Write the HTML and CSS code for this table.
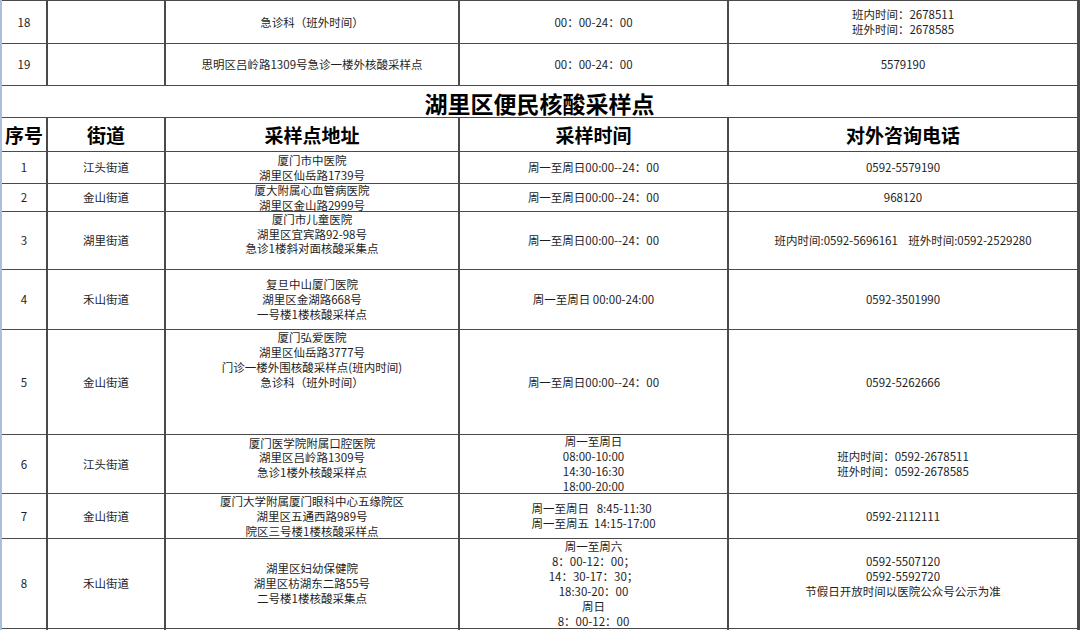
FILE: index.html
```html
<!DOCTYPE html>
<html lang="zh-CN">
<head>
<meta charset="utf-8">
<title>湖里区便民核酸采样点</title>
<link rel="stylesheet" href="styles.css">
</head>
<body>
<div class="sheet">
  <div class="c">18</div>
  <div class="c"></div>
  <div class="c">急诊科（班外时间）</div>
  <div class="c">00：00-24：00</div>
  <div class="c">班内时间：2678511<br>班外时间：2678585</div>

  <div class="c">19</div>
  <div class="c"></div>
  <div class="c">思明区吕岭路1309号急诊一楼外核酸采样点</div>
  <div class="c">00：00-24：00</div>
  <div class="c">5579190</div>

  <div class="title">湖里区便民核酸采样点</div>

  <div class="c th">序号</div>
  <div class="c th">街道</div>
  <div class="c th">采样点地址</div>
  <div class="c th">采样时间</div>
  <div class="c th">对外咨询电话</div>

  <div class="c">1</div>
  <div class="c">江头街道</div>
  <div class="c">厦门市中医院<br>湖里区仙岳路1739号</div>
  <div class="c">周一至周日00:00--24：00</div>
  <div class="c">0592-5579190</div>

  <div class="c">2</div>
  <div class="c">金山街道</div>
  <div class="c tight">厦大附属心血管病医院<br>湖里区金山路2999号</div>
  <div class="c">周一至周日00:00--24：00</div>
  <div class="c">968120</div>

  <div class="c">3</div>
  <div class="c">湖里街道</div>
  <div class="c trail1 snug">厦门市儿童医院<br>湖里区宜宾路92-98号<br>急诊1楼斜对面核酸采集点</div>
  <div class="c">周一至周日00:00--24：00</div>
  <div class="c pre">班内时间:0592-5696161    班外时间:0592-2529280</div>

  <div class="c">4</div>
  <div class="c">禾山街道</div>
  <div class="c">复旦中山厦门医院<br>湖里区金湖路668号<br>一号楼1楼核酸采样点</div>
  <div class="c">周一至周日 00:00-24:00</div>
  <div class="c">0592-3501990</div>

  <div class="c">5</div>
  <div class="c">金山街道</div>
  <div class="c trail3">厦门弘爱医院<br>湖里区仙岳路3777号<br>门诊一楼外围核酸采样点(班内时间)<br>急诊科（班外时间）</div>
  <div class="c">周一至周日00:00--24：00</div>
  <div class="c">0592-5262666</div>

  <div class="c">6</div>
  <div class="c">江头街道</div>
  <div class="c trail1 snug">厦门医学院附属口腔医院<br>湖里区吕岭路1309号<br>急诊1楼外核酸采样点</div>
  <div class="c">周一至周日<br>08:00-10:00<br>14:30-16:30<br>18:00-20:00</div>
  <div class="c">班内时间：0592-2678511<br>班外时间：0592-2678585</div>

  <div class="c">7</div>
  <div class="c">金山街道</div>
  <div class="c">厦门大学附属厦门眼科中心五缘院区<br>湖里区五通西路989号<br>院区三号楼1楼核酸采样点</div>
  <div class="c"><div class="left-lines">周一至周日   8:45-11:30<br>周一至周五  14:15-17:00</div></div>
  <div class="c">0592-2112111</div>

  <div class="c">8</div>
  <div class="c">禾山街道</div>
  <div class="c">湖里区妇幼保健院<br>湖里区枋湖东二路55号<br>二号楼1楼核酸采集点</div>
  <div class="c">周一至周六<br>8：00-12：00；<br>14：30-17：30；<br>18:30-20：00<br>周日<br>8：00-12：00</div>
  <div class="c trail1">0592-5507120<br>0592-5592720<br>节假日开放时间以医院公众号公示为准</div>

  <div class="c"></div>
  <div class="c"></div>
  <div class="c"></div>
  <div class="c"></div>
  <div class="c"></div>
</div>
</body>
</html>
```
FILE: styles.css
```css
html, body {
  margin: 0;
  padding: 0;
  background: #ffffff;
}

body {
  font-family: "Noto Sans CJK SC", "Noto Sans", sans-serif;
  color: #1e1e1e;
}

.sheet {
  width: 1077px;
  display: grid;
  grid-template-columns: 44px 116px 292px 267px 348px;
  grid-template-rows: 42px 41px 31px 33px 31px 27px 57px 59px 104px 58px 44px 89px 30px;
  column-gap: 2px;
  row-gap: 1px;
  padding: 1px 2px 0 0;
  background: #4a4a4a;
  border-left: 2px solid #a9bfdc;
}

.c {
  background: #ffffff;
  display: flex;
  align-items: center;
  justify-content: center;
  text-align: center;
  font-size: 11.5px;
  line-height: 15px;
  white-space: nowrap;
  min-width: 0;
}

.tight {
  line-height: 14.5px;
}

.pre {
  white-space: pre;
}

.trail1 {
  padding-bottom: 15px;
}

.trail1.snug {
  padding-bottom: 13px;
  line-height: 14.5px;
}

.trail3 {
  padding-bottom: 45px;
}

.left-lines {
  text-align: left;
  white-space: pre;
}

.th {
  font-size: 19px;
  font-weight: 700;
  color: #000000;
  line-height: 24px;
}

.title {
  grid-column: 1 / -1;
  background: #ffffff;
  display: flex;
  align-items: center;
  justify-content: center;
  font-size: 23px;
  font-weight: 700;
  color: #000000;
  line-height: 28px;
  padding-top: 2px;
}
```
